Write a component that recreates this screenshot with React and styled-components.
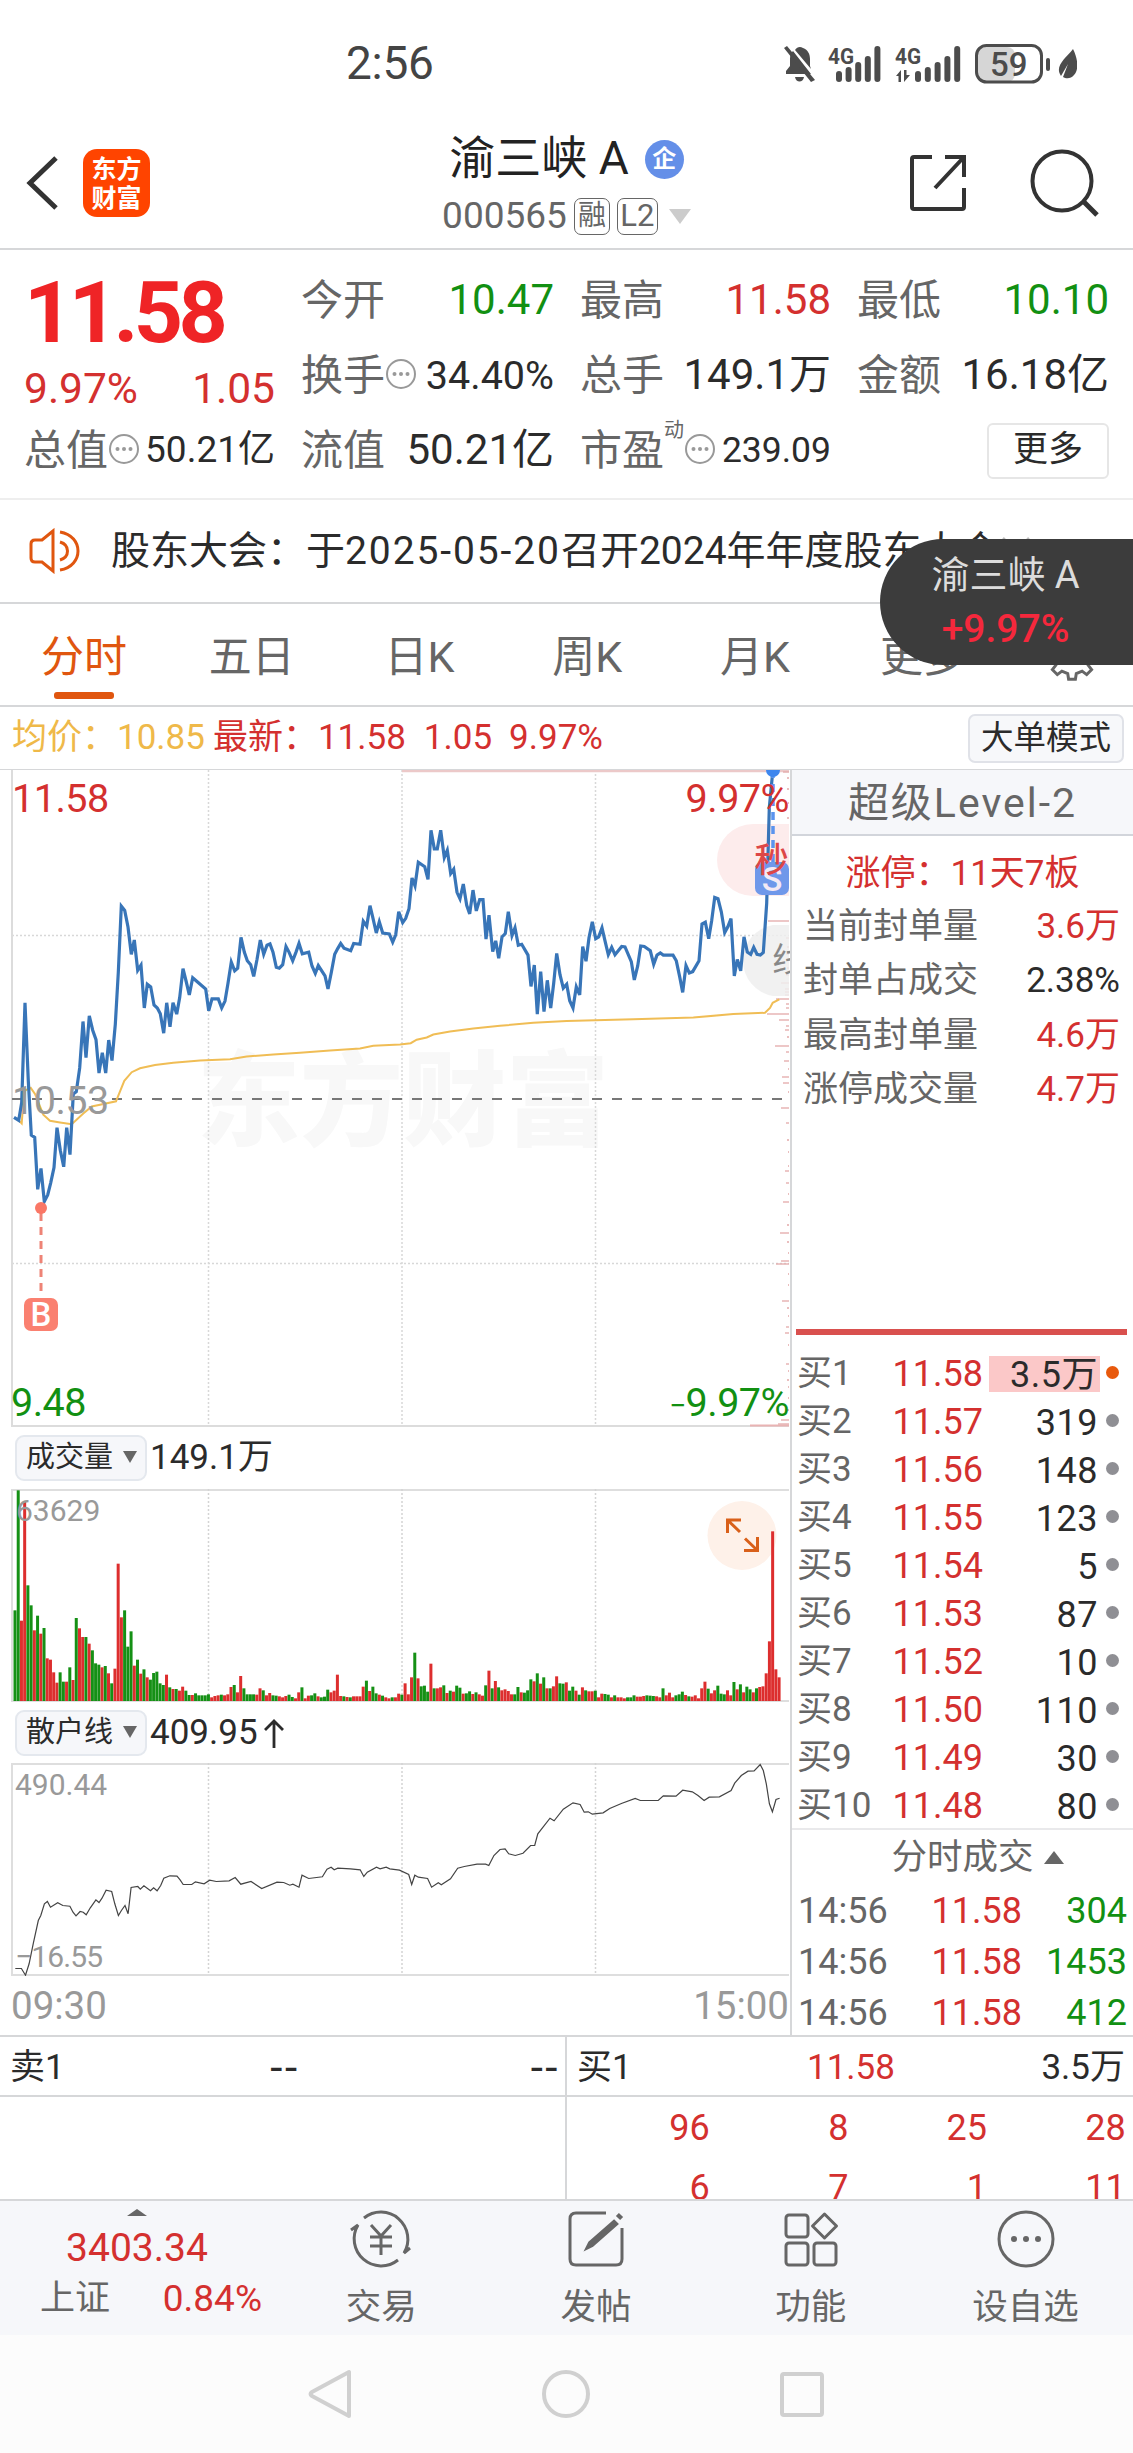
import React from "react";
import styled, { createGlobalStyle } from "styled-components";

const RED = "#d4302f";
const GREEN = "#129012";
const GREY = "#666";
const DARK = "#2b2b2b";
const ORANGE = "#e0560f";
const LINE = "#d6d7d9";
const FONT = `Roboto, "Noto Sans CJK SC", sans-serif`;

const GlobalStyle = createGlobalStyle`
  * {
    box-sizing: border-box;
  }
  body {
    margin: 0;
    background: #fff;
    color: ${DARK};
    font-family: ${FONT};
  }
`;

const Screen = styled.div`
  width: 1133px;
  height: 2453px;
  overflow: hidden;
  position: relative;
  display: flex;
  flex-direction: column;
`;

const Text = styled.span`
  font-size: ${props => props.size || 35}px;
  line-height: 1.2;
  color: ${props => props.color || DARK};
  font-weight: ${props => props.weight || 400};
  letter-spacing: ${props => props.spacing || 0}px;
  white-space: nowrap;
`;

/* status bar */
const StatusBar = styled.div`
  height: 124px;
  display: flex;
  align-items: center;
  justify-content: space-between;
  padding: 3px 56px 0 346px;
`;
const StatusIcons = styled.div`
  display: flex;
  height: 40px;
`;

/* title bar */
const TitleBar = styled.header`
  height: 126px;
  border-bottom: 2px solid ${LINE};
  display: grid;
  grid-template-columns: 300px 1fr 300px;
`;
const TitleLeft = styled.div`
  display: flex;
  align-items: center;
  gap: 25px;
  padding: 0 0 6px 26px;
  height: 124px;
`;
const Logo = styled.div`
  width: 67px;
  height: 68px;
  border-radius: 14px;
  background: #ff4400;
  color: #fff;
  font-family: "Noto Sans CJK SC", sans-serif;
  font-size: 25px;
  font-weight: 700;
  line-height: 29px;
  text-align: center;
  padding-top: 4px;
`;
const TitleMiddle = styled.div`
  display: flex;
  flex-direction: column;
  align-items: center;
`;
const NameRow = styled.div`
  height: 64px;
  padding-top: 6px;
  display: flex;
  align-items: center;
  gap: 16px;
`;
const CompanyBadge = styled.div`
  width: 39px;
  height: 39px;
  border-radius: 50%;
  background: #648fe8;
  color: #fff;
  font-size: 24px;
  font-weight: 700;
  line-height: 38px;
  text-align: center;
`;
const CodeRow = styled.div`
  height: 60px;
  padding-bottom: 4px;
  display: flex;
  align-items: center;
`;
const CodeTag = styled.span`
  height: 37px;
  width: ${props => props.w}px;
  margin-left: 7px;
  border: 1.5px solid ${GREY};
  border-radius: 7px;
  font-size: ${props => props.size}px;
  line-height: 34px;
  color: ${GREY};
  text-align: center;
`;
const Triangle = styled.i`
  border-left: ${props => props.w / 2}px solid transparent;
  border-right: ${props => props.w / 2}px solid transparent;
  border-${props => (props.up ? "bottom" : "top")}: ${props => props.h}px solid ${props => props.color || GREY};
`;
const CodeArrow = styled(Triangle)`
  margin-left: 11px;
`;
const TitleRight = styled.div`
  display: flex;
  align-items: center;
  justify-content: flex-end;
  gap: 61px;
  height: 124px;
  padding: 0 33px 6px 0;
`;

/* quote summary */
const Quote = styled.section`
  height: 250px;
  border-bottom: 2px solid #eee;
  padding: 13px 25px 0 24px;
  display: grid;
  grid-template-columns: 251px 253px 251px 252px;
  grid-template-rows: 75px 75px 75px;
  column-gap: 26px;
`;
const Price = styled.div`
  grid-row: span 2;
  display: flex;
  flex-direction: column;
`;
const LastPrice = styled.div`
  height: 100px;
  font-size: 86px;
  font-weight: 700;
  line-height: 100px;
  letter-spacing: -4.6px;
  color: #ef2426;
`;
const Changes = styled.div`
  display: flex;
  justify-content: space-between;
  height: 48px;
  line-height: 48px;
`;
const Metric = styled.div`
  display: flex;
  align-items: center;
  justify-content: space-between;
`;
const MetricLabel = styled.div`
  display: flex;
  align-items: center;
  font-size: 42px;
  line-height: 50px;
  color: ${GREY};
  white-space: nowrap;
`;
const Sup = styled.span`
  align-self: flex-start;
  font-size: 20px;
  line-height: 20px;
  margin-top: -6px;
`;
const MoreButton = styled.button`
  justify-self: end;
  align-self: center;
  width: 122px;
  height: 56px;
  border: 2px solid #e6e6e6;
  border-radius: 6px;
  background: #fff;
  font-family: ${FONT};
  font-size: 35px;
  line-height: 48px;
  padding: 0 0 2px;
  color: ${DARK};
`;

/* announcement */
const Notice = styled.div`
  height: 104px;
  border-bottom: 2px solid ${LINE};
  display: flex;
  align-items: center;
  padding: 0 31px 0 28px;
`;
const NoticeText = styled.div`
  width: 890px;
  margin-left: 30px;
  font-size: 39px;
  line-height: 48px;
  white-space: nowrap;
  overflow: hidden;
  span {
    letter-spacing: 1.9px;
  }
`;
const FloatingQuote = styled.div`
  position: absolute;
  top: 539px;
  right: 0;
  width: 253px;
  height: 126px;
  border-radius: 63px 0 0 63px;
  background: #3c3c3c;
  display: flex;
  flex-direction: column;
  align-items: center;
  padding: 9px 2px 0 0;
  line-height: 54px;
`;
const FloatingLine = styled.div`
  height: 54px;
  font-size: ${props => props.size}px;
  line-height: 54px;
  color: ${props => props.color};
  font-weight: ${props => props.weight || 400};
`;

/* period tabs */
const Tabs = styled.nav`
  height: 103px;
  border-bottom: 2px solid ${LINE};
  display: flex;
`;
const Tab = styled.div`
  width: 167.8px;
  padding-top: 25px;
  font-size: 43px;
  line-height: 56px;
  text-align: center;
  color: ${props => (props.active ? ORANGE : GREY)};
  &::after {
    content: "";
    display: block;
    width: 60px;
    height: 7px;
    margin: 7px auto 0;
    border-radius: 3px;
    background: ${props => (props.active ? ORANGE : "transparent")};
  }
`;
const Settings = styled.div`
  padding: 24px 0 0 38px;
`;

const InfoRow = styled.div`
  height: 62px;
  display: flex;
  align-items: center;
  padding: 0 9px 0 12px;
`;
const InfoItem = styled.span`
  font-size: 35px;
  line-height: 44px;
  color: ${props => props.color};
  white-space: pre;
  margin-right: ${props => props.gap}px;
`;
const ModeButton = styled.button`
  margin-left: auto;
  width: 156px;
  height: 49px;
  border: 2px solid #e0e2e8;
  border-radius: 7px;
  background: #f7f8fa;
  font-family: ${FONT};
  font-size: 32.5px;
  line-height: 42px;
  padding: 0;
  color: ${DARK};
`;

/* chart column and level 2 column */
const Main = styled.main`
  height: 1268px;
  display: flex;
  border-top: 1px solid ${LINE};
  border-bottom: 2px solid ${LINE};
`;
const Charts = styled.div`
  width: 790px;
  padding-left: 11px;
  svg {
    display: block;
  }
`;
const IndicatorBar = styled.div`
  height: ${props => props.h}px;
  display: flex;
  align-items: center;
  padding-left: 4px;
`;
const IndicatorSelect = styled.div`
  width: 132px;
  height: 46px;
  border: 2px solid #e4e8ee;
  border-radius: 9px;
  background: #f6f7fa;
  display: flex;
  align-items: center;
  justify-content: space-between;
  padding: 0 8px 2px 9px;
  margin-right: 3px;
  font-size: 29px;
  line-height: 40px;
`;
const TimeAxis = styled.div`
  display: flex;
  justify-content: space-between;
  height: 60px;
  padding: 7px 1px 0 0;
  font-size: 38.5px;
  line-height: 46px;
  color: #999;
`;

const Level2 = styled.aside`
  width: 343px;
  border-left: 2px solid ${LINE};
`;
const LevelTitle = styled.div`
  height: 66px;
  background: #f6f7fa;
  border-bottom: 2px solid #d2d5db;
  text-align: center;
  font-size: 41px;
  line-height: 67px;
  letter-spacing: 2px;
  color: ${GREY};
`;
const LimitInfo = styled.div`
  height: 493px;
  padding-top: 12px;
`;
const LimitTitle = styled.div`
  height: 52px;
  text-align: center;
  font-size: 35px;
  line-height: 52px;
  color: ${RED};
`;
const LimitRow = styled.div`
  height: 54.3px;
  display: flex;
  justify-content: space-between;
  padding: 0 13px 0 11px;
  font-size: 35px;
  line-height: 54px;
  color: ${GREY};
`;
const LimitValue = styled.span`
  color: ${props => (props.dark ? DARK : RED)};
`;
const RatioBar = styled.div`
  height: 6px;
  margin: 0 6px 14px 4px;
  background: #d9504e;
`;
const Book = styled.div`
  height: 481px;
  border-bottom: 2px solid #e9e9eb;
`;
const BookRow = styled.div`
  height: 48.05px;
  display: grid;
  grid-template-columns: 80px 106px 117px 20px;
  align-items: center;
  padding: 0 13px 0 5px;
  font-size: 36px;
  line-height: 50px;
`;
const BookPrice = styled.span`
  color: ${RED};
  text-align: right;
`;
const BookVolume = styled.span`
  margin-left: 6px;
  padding-right: 2px;
  height: 36px;
  line-height: 38px;
  letter-spacing: 0.5px;
  text-align: right;
  background: ${props => (props.marked ? "#fbc8c8" : "transparent")};
`;
const BookDot = styled.i`
  justify-self: end;
  width: 13px;
  height: 13px;
  margin: 0 1px 4px 0;
  border-radius: 50%;
  background: ${props => (props.marked ? "#e8590c" : "#8f8f94")};
`;
const TradesTitle = styled.div`
  height: 54px;
  display: flex;
  align-items: center;
  justify-content: center;
  gap: 10px;
  padding-left: 30px;
  font-size: 35.5px;
  line-height: 54px;
  color: ${GREY};
`;
const TradeRow = styled.div`
  height: 51px;
  display: grid;
  grid-template-columns: 110px 114px 1fr;
  padding: 0 6px 0 6px;
  font-size: 36px;
  line-height: 54px;
  color: ${GREY};
`;
const TradeCell = styled.span`
  text-align: right;
  color: ${props => props.color};
`;

/* best bid and ask */
const Best = styled.section`
  height: 162px;
  display: grid;
  grid-template-columns: 567px 566px;
  overflow: hidden;
`;
const BestSide = styled.div`
  border-right: ${props => (props.divider ? `2px solid ${LINE}` : "0")};
`;
const BestHead = styled.div`
  height: 60px;
  border-bottom: 2px solid ${LINE};
  display: grid;
  grid-template-columns: 1fr 1fr 1fr;
  padding: 0 8px 0 10px;
  font-size: 35px;
  line-height: 62px;
`;
const BestPrice = styled.span`
  text-align: center;
  color: ${RED};
`;
const BestVolume = styled.span`
  text-align: right;
`;
const Blank = styled.span`
  font-size: 44px;
  letter-spacing: 2.5px;
  text-align: ${props => props.align};
  margin-right: -3px;
`;
const Orders = styled.div`
  display: grid;
  grid-template-columns: repeat(4, 138.7px);
  padding: 1px 0 0 4px;
  font-size: 36px;
  line-height: 60px;
  text-align: right;
  color: ${RED};
`;

/* bottom bars */
const BottomBar = styled.footer`
  height: 136px;
  border-top: 2px solid ${LINE};
  background: #f6f7fa;
  display: grid;
  grid-template-columns: 274px repeat(4, 1fr);
`;
const IndexBox = styled.div`
  display: flex;
  flex-direction: column;
  align-items: center;
  padding-top: 8px;
`;
const IndexChange = styled.div`
  width: 222px;
  margin-left: 28px;
  height: 52px;
  display: flex;
  align-items: center;
  justify-content: space-between;
`;
const IndexValue = styled.div`
  height: 57px;
  font-size: 39px;
  line-height: 65px;
  color: ${RED};
`;
const Action = styled.div`
  display: flex;
  flex-direction: column;
  align-items: center;
  padding-top: 8px;
  font-size: 35.5px;
  line-height: 54px;
  color: ${GREY};
  svg {
    margin-bottom: 11px;
  }
`;
const SystemNav = styled.div`
  flex: 1;
  background: #fcfcfc;
  display: flex;
  justify-content: center;
  align-items: flex-start;
  gap: 186px;
  padding: 33px 2px 0 0;
`;

/* [x, y] samples of the intraday price, 3 units per pixel across */
const PRICE = `42,824 56,831 65,790 75,560 85,740 94,865 104,870 113,990 123,942 133,1018 143,1003 152,975 162,940
171,848 181,900 191,938 200,848 210,910 220,770 229,765 239,710 249,603 258,686 268,590 278,623 288,645 297,722
307,675 317,722 326,646 336,693 346,610 355,490 364,337 374,347 384,385 394,448 403,415 413,485 423,473 433,572
442,517 452,523 462,565 472,572 481,585 491,630 500,560 510,615 519,560 530,586 539,548 549,481 559,512 568,542
578,502 590,510 617,528 626,578 636,551 655,551 665,572 675,556 684,515 694,466 704,486 713,480 723,409 733,443
742,463 752,472 761,499 771,460 781,415 791,448 801,427 810,424 819,443 829,478 838,480 848,472 858,430 867,443
878,463 888,443 897,423 907,447 926,443 936,475 946,492 955,474 975,498 984,528 994,490 1004,448 1013,435
1022,423 1032,434 1052,440 1061,423 1080,425 1090,372 1100,383 1110,336 1119,365 1129,399 1138,373 1148,399
1168,401 1178,420 1187,403 1196,350 1208,375 1217,365 1227,343 1236,272 1245,290 1255,236 1274,246 1284,275
1293,162 1303,205 1312,205 1322,162 1333,225 1342,208 1352,262 1361,252 1371,305 1380,320 1390,286 1400,335
1409,355 1419,300 1429,348 1439,322 1449,322 1458,413 1467,358 1478,442 1487,417 1496,457 1506,408 1516,400
1525,350 1536,405 1545,387 1555,427 1565,425 1584,450 1593,522 1603,473 1612,586 1622,488 1632,580 1642,508
1652,572 1661,515 1670,446 1680,495 1690,526 1700,517 1709,555 1719,572 1729,523 1739,542 1748,430 1758,464
1767,410 1777,373 1787,412 1796,408 1806,387 1816,420 1825,449 1835,432 1845,449 1865,430 1875,431 1894,465
1903,507 1913,475 1922,429 1933,430 1951,440 1961,471 1971,450 1981,445 1990,450 2019,450 2029,463 2039,500
2048,536 2058,474 2068,491 2078,488 2097,463 2106,378 2116,374 2126,412 2135,370 2144,317 2154,320 2164,350
2174,398 2183,385 2193,366 2203,498 2212,460 2222,486 2232,408 2242,443 2252,448 2261,432 2271,448 2281,450
2290,444 2300,330 2308,110 2318,28`;

const AVERAGE = `56,831 65,838 70,790 76,762 92,756 105,770 130,818 150,832 180,836 215,840 250,815 275,799 300,795 348,787
373,740 395,720 420,711 465,703 520,698 600,693 690,690 740,684 820,679 900,675 990,670 1080,665 1120,659 1200,656
1232,653 1250,645 1280,640 1300,633 1350,626 1420,619 1500,613 1600,606 1700,602 1900,598 2080,594 2200,586
2295,583 2310,572 2318,560 2338,552`;

const RETAIL = `30,684 42,684 50,704 57,670 65,610 75,540 80,525 87,490 93,483 99,500 113,487 123,495 137,497 143,515
149,526 157,513 163,515 169,523 177,502 188,478 194,486 200,473 208,449 219,453 225,490 232,525 238,510 245,495
251,520 257,441 270,438 275,446 282,436 295,451 301,442 308,451 315,435 321,413 333,406 347,407 353,418 359,432
376,432 383,424 400,430 411,419 424,423 449,421 461,411 472,431 492,423 513,444 543,425 556,426 568,434 574,431
586,440 592,404 605,414 632,409 641,386 649,380 655,388 662,383 687,385 706,388 713,408 720,395 738,380 745,385
757,380 764,385 783,389 801,402 807,432 813,404 820,410 838,414 846,440 859,427 865,433 883,415 897,383 910,378
935,371 952,371 958,375 968,345 980,327 990,325 997,340 1010,345 1025,338 1040,315 1048,315 1054,280 1078,233
1086,241 1104,206 1123,187 1137,192 1145,215 1153,214 1161,221 1182,217 1195,204 1218,189 1245,174 1255,180
1290,180 1300,166 1325,167 1338,149 1357,154 1368,165 1380,180 1390,170 1410,169 1433,150 1440,128 1453,105
1466,92 1478,91 1490,72 1496,90 1502,130 1508,190 1514,214 1521,177 1528,173`;

/* one bar a minute: direction and height */
const VOLUME = `g272 g632 r241 r600 g347 g287 r212 g256 r202 g219 r128 r124 r86 r55 g86 g58 r58 g101 r63 g249 r218 r192
g192 r172 g152 g113 g109 r101 g105 r83 g53 r97 r412 r251 g272 g163 g209 r106 g124 r82 g95 r71 g64 g84 g88 g53 g48
r79 g41 r36 g36 r31 r43 g31 g18 r18 g23 g17 g17 g17 g20 r11 r15 r17 g19 r17 r20 r42 g48 r26 r75 g38 g20 g20 g20
r19 r38 g32 r17 r24 g17 g16 r14 r11 r15 g19 g12 r8 r26 g41 r8 r16 g17 g23 r14 g11 g13 g34 r26 r31 r79 r15 g14 r12
g11 r14 r14 r14 r43 g61 r30 g43 g23 r19 g16 r11 r8 g11 r11 r22 g19 r53 r20 r71 g145 r68 g44 g46 g28 r112 g38 r38
r41 g47 r24 g31 r28 g46 g40 r22 g23 g29 r21 g26 r20 r16 g47 r91 g38 r60 g41 r32 r35 r30 r20 g20 g42 r26 g25 g32
g65 r59 g83 r52 g71 r38 g38 r44 r74 g53 g52 r56 g31 g43 r31 g19 r41 g32 r29 r29 g31 r11 r22 g21 g19 r11 g17 r11
r11 r8 g11 g11 g17 r13 r13 r15 g17 g16 g15 r14 r11 g38 r17 r25 r11 g17 g20 g28 r18 g14 r13 r17 r8 r38 r58 g37 r23
r32 g46 g22 g20 r32 r17 g57 r35 g50 r26 g43 g35 r26 g38 r42 r44 r83 r179 r509 r95 r71`;

/* traded volume by price, drawn from the right edge: [y, length] */
const PRICE_LEVELS = [
  [2, 6], [8, 2], [19, 2], [33, 1], [48, 2], [63, 3], [78, 1], [92, 2], [108, 2], [120, 1], [151, 21], [168, 3], [177, 2],
  [184, 3], [190, 2], [198, 2], [205, 3], [213, 8], [219, 4], [222, 4], [225, 4], [229, 13], [234, 3], [238, 3], [244, 22],
  [250, 10], [256, 3], [260, 4], [267, 2], [276, 14], [282, 3], [291, 5], [299, 1], [307, 7], [313, 6], [322, 1],
  [338, 8], [353, 3], [370, 2], [382, 1], [396, 1], [401, 4], [413, 3], [424, 1], [432, 6], [445, 1], [455, 2], [463, 9],
  [472, 2], [483, 1], [491, 8], [494, 13], [504, 1], [515, 1], [531, 7], [538, 2], [546, 1], [557, 3], [563, 4], [575, 1],
  [594, 3], [601, 1], [610, 2], [617, 1], [628, 1], [640, 2], [650, 8], [654, 11]
];

const toPoints = (data, sx, sy, dx, dy) =>
  data
    .trim()
    .split(/\s+/)
    .map(pair => {
      const [x, y] = pair.split(",").map(Number);
      return `${(x / sx - dx).toFixed(1)},${(y / sy - dy).toFixed(1)}`;
    })
    .join(" ");

const metrics = [
  { label: "今开", value: "10.47", color: GREEN },
  { label: "最高", value: "11.58", color: RED },
  { label: "最低", value: "10.10", color: GREEN },
  { label: "换手", value: "34.40%", size: 39.5, info: true },
  { label: "总手", value: "149.1万" },
  { label: "金额", value: "16.18亿" },
  { label: "总值", value: "50.21亿", size: 37, info: true },
  { label: "流值", value: "50.21亿" },
  { label: "市盈", value: "239.09", size: 35.5, info: true, sup: "动" }
];

const limits = [
  ["当前封单量", "3.6万"],
  ["封单占成交", "2.38%"],
  ["最高封单量", "4.6万"],
  ["涨停成交量", "4.7万"]
];

const book = [
  ["11.58", "3.5万"],
  ["11.57", "319"],
  ["11.56", "148"],
  ["11.55", "123"],
  ["11.54", "5"],
  ["11.53", "87"],
  ["11.52", "10"],
  ["11.50", "110"],
  ["11.49", "30"],
  ["11.48", "80"]
];

const InfoIcon = () => (
  <svg width="32" height="34" viewBox="0 0 32 34">
    <circle cx="16" cy="15" r="14" fill="none" stroke="#999" strokeWidth="2" />
    <circle cx="9.5" cy="15" r="2" fill="#999" />
    <circle cx="16" cy="15" r="2" fill="#999" />
    <circle cx="22.5" cy="15" r="2" fill="#999" />
  </svg>
);

/* the signal group is drawn in page pixels starting at x 780, y 42 */
const StatusGlyphs = () => (
  <svg width="297" height="40" viewBox="780 42 297 40">
    <g fill="#4c4c4c">
      <path d="M786 72 L786 69 L790 64 V57 C790 53 791 51 793 49 L811 72 Z" />
      <path d="M795 48 C797 45 800 44 803 46 C808 48 810 52 810 57 V64 L811 67 Z" />
      <path d="M795 75 H804 C803 81 796 81 795 75 Z" />
      <path d="M784 46 L787 44 L815 78 L811 80 Z" />
      {[69, 65, 60, 54, 44].map((y, i) => (
        <rect key={y} x={836 + i * 9.6} y={y} width="6" height={80 - y} rx="3" />
      ))}
      {[69, 65, 60, 54, 44].map((y, i) => (
        <rect key={y} x={915 + i * 9.8} y={y} width="6" height={80 - y} rx="3" />
      ))}
      <path d="M901 68 V80 H898.500 V74 L896 74 Z M904 80 V68 H906.500 V73 L910 73 Z" />
      <rect x="1046" y="56" width="4" height="13" rx="2" />
      <path d="M1073 47 C1078 57 1079 68 1074 73 C1071 77 1066 77 1063 75 L1068 62 L1061 74 C1054 64 1066 56 1073 47 Z" />
    </g>
    <rect x="977" y="45" width="38" height="35" rx="8" fill="#d6d6d6" />
    <rect x="976.500" y="43.500" width="65" height="36.500" rx="10" fill="none" stroke="#4c4c4c" strokeWidth="3" />
    <g fill="#4c4c4c" fontFamily="Roboto" fontWeight="700">
      <text x="828" y="62" fontSize="22" textLength="26" lengthAdjust="spacingAndGlyphs">4G</text>
      <text x="895" y="62" fontSize="22" textLength="26" lengthAdjust="spacingAndGlyphs">4G</text>
      <text x="990" y="73.500" fontSize="33" fontWeight="500">59</text>
    </g>
  </svg>
);

const PriceChart = () => (
  <svg width="779" height="657" viewBox="0 0 779 657">
    <text x="186" y="368" fontSize="103" fontWeight="900" fill="#f8f8f8" fontFamily="Noto Sans CJK SC" textLength="412">
      东方财富
    </text>
    <g stroke="#d8d8d8" strokeWidth="1.500" strokeDasharray="2 2">
      <path d="M1 165.500 H778 M1 493.500 H778" />
      <path d="M197.500 0 V656 M391 0 V656 M584.500 0 V656" />
    </g>
    <path d="M1 0 V656 H778" fill="none" stroke="#dcdcdc" strokeWidth="2" />
    <path d="M391 1 H778" stroke="#ecc9c9" strokeWidth="2.500" />
    <path d="M739 655.500 H778" stroke="#e9b3b3" strokeWidth="2" />
    {PRICE_LEVELS.map(([y, w]) => (
      <path key={y} d={`M${778 - w} ${y} h${w}`} stroke="#e3a9a9" strokeWidth="1.300" />
    ))}
    <path d="M778 54 H742 A36 36 0 0 0 742 126 H778 Z" fill="#fdecec" />
    <path d="M778 155 H762 A36 36 0 0 0 762 226 H778 Z" fill="#eee" fillOpacity="0.85" />
    <path d="M1 329 H778" stroke="#777" strokeWidth="2" strokeDasharray="10 10" />
    <polyline points={toPoints(AVERAGE, 3, 2.306, 11, 10)} fill="none" stroke="#f0bd55" strokeWidth="2" />
    <polyline points={toPoints(PRICE, 3, 2.306, 11, 10)} fill="none" stroke="#3875b8" strokeWidth="3.200" />

    <path d="M30 443 V527" stroke="#ee8376" strokeWidth="3" strokeDasharray="8 6" />
    <circle cx="30" cy="438" r="6" fill="#fa7766" />
    <rect x="13" y="528" width="34" height="33" rx="7" fill="#fa8070" />
    <text x="30" y="555.500" fontSize="33" fontWeight="500" fill="#fff" textAnchor="middle">B</text>

    <path d="M762 0 V92" stroke="#5b94ee" strokeWidth="3.500" strokeDasharray="8 6" />
    <path d="M755 0 A7 7 0 0 0 769 0 Z" fill="#3d86ee" />
    <rect x="744" y="92" width="34" height="33" rx="7" fill="#6f98ea" />
    <text x="761" y="121" fontSize="34" fontWeight="500" fill="#f4e9f4" textAnchor="middle">S</text>
    <text x="743.500" y="102" fontSize="34" fontWeight="500" fill="#dd4747">秒</text>
    <text x="761" y="202" fontSize="34" fill="#888">线</text>

    <g fontSize="39.500" letterSpacing="-0.500">
      <text x="1" y="42" fill={RED}>11.58</text>
      <text x="1" y="344" fill="#999">10.53</text>
      <text x="0" y="646" fill={GREEN}>9.48</text>
      <text x="778" y="42" fill={RED} textAnchor="end">9.97%</text>
      <text x="778" y="646" fill={GREEN} textAnchor="end">
        <tspan fontSize="30">−</tspan>9.97%
      </text>
    </g>
  </svg>
);

const VolumeChart = () => (
  <svg width="779" height="213" viewBox="0 0 779 213">
    <path d="M0 1 H778 M1 0 V212 M0 212 H778" stroke="#dedede" strokeWidth="2" />
    <path d="M197.500 0 V212 M391 0 V212 M584.500 0 V212" stroke="#d4d4d4" strokeWidth="1.500" strokeDasharray="2 2" />
    <circle cx="731" cy="46.500" r="34.500" fill="#fef1e9" />
    <g fill="none" stroke="#d9601a" strokeWidth="3">
      <path d="M730 31 H716.500 V44 M716.500 31 L729 43" />
      <path d="M733 61.500 H746.500 V48 M746.500 61.500 L734 49.500" />
    </g>
    {VOLUME.split(/\s+/).map((bar, i) => {
      const h = Number(bar.slice(1)) / 3;
      return (
        <rect
          key={i}
          x={2.5 + i * 3.224}
          y={212 - h}
          width="3"
          height={h}
          fill={bar[0] === "r" ? "#dd2e2e" : "#159015"}
        />
      );
    })}
    <text x="5" y="32" fontSize="30" fill="#999">63629</text>
  </svg>
);

const RetailChart = () => (
  <svg width="779" height="213" viewBox="0 0 779 213">
    <path d="M0 1 H778 M1 0 V212 M0 212 H778" stroke="#dedede" strokeWidth="2" />
    <path d="M197.500 0 V212 M391 0 V212 M584.500 0 V212" stroke="#d4d4d4" strokeWidth="1.500" strokeDasharray="2 2" />
    <polyline points={toPoints(RETAIL, 1.96, 3, 11, 22.5)} fill="none" stroke="#444" strokeWidth="1.200" />
    <g fontSize="30" fill="#999">
      <text x="4" y="32">490.44</text>
      <text x="4" y="204" textLength="88">−16.55</text>
    </g>
  </svg>
);

const gearPath = () => {
  const points = [];
  for (let i = 0; i < 8; i += 1) {
    [[-13, 19], [-8, 24.5], [8, 24.5], [13, 19]].forEach(([deg, r]) => {
      const a = ((i * 45 + deg) * Math.PI) / 180;
      points.push(`${(27 + r * Math.sin(a)).toFixed(1)},${(27 - r * Math.cos(a)).toFixed(1)}`);
    });
  }
  return points.join(" ");
};

const App = () => (
  <Screen>
    <GlobalStyle />
    <StatusBar>
      <Text size={46} color="#444" spacing={-0.3}>2:56</Text>
      <StatusIcons>
        <StatusGlyphs />
      </StatusIcons>
    </StatusBar>

    <TitleBar>
      <TitleLeft>
        <svg width="32" height="54" viewBox="0 0 32 54" fill="none" stroke="#333" strokeWidth="5">
          <path d="M30 2 L4 27 L30 52" />
        </svg>
        <Logo>
          东方
          <br />
          财富
        </Logo>
      </TitleLeft>
      <TitleMiddle>
        <NameRow>
          <Text size={46} color="#222">渝三峡 A</Text>
          <CompanyBadge>企</CompanyBadge>
        </NameRow>
        <CodeRow>
          <Text size={37} color={GREY}>000565</Text>
          <CodeTag w={36} size={28}>融</CodeTag>
          <CodeTag w={41} size={31}>L2</CodeTag>
          <CodeArrow w={22} h={15} color="#ccc" />
        </CodeRow>
      </TitleMiddle>
      <TitleRight>
        <svg width="60" height="60" viewBox="0 0 60 60" fill="none" stroke="#333" strokeWidth="4">
          <path d="M24 4 H6 Q4 4 4 6 V54 Q4 56 6 56 H54 Q56 56 56 54 V35" />
          <path d="M37 4 H56 V24 M56 4 L27 35" />
        </svg>
        <svg width="71" height="70" viewBox="0 0 71 70" fill="none" stroke="#333" strokeWidth="4">
          <circle cx="33" cy="33" r="29.500" />
          <path d="M54 53 L68 67" strokeWidth="5" />
        </svg>
      </TitleRight>
    </TitleBar>

    <Quote>
      <Price>
        <LastPrice>11.58</LastPrice>
        <Changes>
          <Text size={42.5} color={RED}>9.97%</Text>
          <Text size={42.5} color={RED}>1.05</Text>
        </Changes>
      </Price>
      {metrics.map(item => (
        <Metric key={item.label}>
          <MetricLabel>
            {item.label}
            {item.sup && <Sup>{item.sup}</Sup>}
            {item.info && <InfoIcon />}
          </MetricLabel>
          <Text size={item.size || 42} color={item.color}>{item.value}</Text>
        </Metric>
      ))}
      <MoreButton>更多</MoreButton>
    </Quote>

    <Notice>
      <svg width="53" height="46" viewBox="0 0 53 46" fill="none" stroke={ORANGE} strokeWidth="3">
        <path d="M25 3 L14 12 H7 Q3 12 3 16 V30 Q3 34 7 34 H14 L25 43 Z" />
        <path d="M32 4 C56 8 56 38 32 42 M32 14 C42 17 42 29 32 32" />
      </svg>
      <NoticeText>
        股东大会：于<span>2025-05-20</span>召开2024年年度股东大会
      </NoticeText>
      <svg width="30" height="30" viewBox="0 0 30 30" stroke="#bbb" strokeWidth="2.500">
        <path d="M2 2 L28 28 M28 2 L2 28" />
      </svg>
    </Notice>

    <Tabs>
      {["分时", "五日", "日K", "周K", "月K", "更多"].map((name, i) => (
        <Tab key={name} active={i === 0 || undefined}>{name}</Tab>
      ))}
      <Settings>
        <svg width="54" height="54" viewBox="0 0 54 54" fill="none" stroke={GREY} strokeWidth="3">
          <polygon points={gearPath()} />
          <circle cx="27" cy="27" r="8" />
        </svg>
      </Settings>
    </Tabs>

    <InfoRow>
      <InfoItem color="#efb949" gap={8}>均价：10.85</InfoItem>
      <InfoItem color={RED} gap={18}>最新：11.58</InfoItem>
      <InfoItem color={RED} gap={17}>1.05</InfoItem>
      <InfoItem color={RED} gap={0}>9.97%</InfoItem>
      <ModeButton>大单模式</ModeButton>
    </InfoRow>

    <Main>
      <Charts>
        <PriceChart />
        <IndicatorBar h={62}>
          <IndicatorSelect>
            成交量
            <Triangle w={15} h={12} />
          </IndicatorSelect>
          <Text size={35}>149.1万</Text>
        </IndicatorBar>
        <VolumeChart />
        <IndicatorBar h={61}>
          <IndicatorSelect>
            散户线
            <Triangle w={15} h={12} />
          </IndicatorSelect>
          <Text size={35}>409.95</Text>
          <svg width="28" height="32" viewBox="0 0 28 32" fill="none" stroke={DARK} strokeWidth="2.800">
            <path d="M16 31 V4 M7 13 L16 4 L25 13" />
          </svg>
        </IndicatorBar>
        <RetailChart />
        <TimeAxis>
          <span>09:30</span>
          <span>15:00</span>
        </TimeAxis>
      </Charts>

      <Level2>
        <LevelTitle>超级Level-2</LevelTitle>
        <LimitInfo>
          <LimitTitle>涨停：11天7板</LimitTitle>
          {limits.map(([label, value], i) => (
            <LimitRow key={label}>
              {label}
              <LimitValue dark={i === 1 || undefined}>{value}</LimitValue>
            </LimitRow>
          ))}
        </LimitInfo>
        <RatioBar />
        <Book>
          {book.map(([price, volume], i) => (
            <BookRow key={price}>
              <Text size={35} color={GREY}>买{i + 1}</Text>
              <BookPrice>{price}</BookPrice>
              <BookVolume marked={i === 0 || undefined}>{volume}</BookVolume>
              <BookDot marked={i === 0 || undefined} />
            </BookRow>
          ))}
        </Book>
        <TradesTitle>
          分时成交
          <Triangle up w={20} h={13} />
        </TradesTitle>
        {["304", "1453", "412"].map(volume => (
          <TradeRow key={volume}>
            14:56
            <TradeCell color={RED}>11.58</TradeCell>
            <TradeCell color={GREEN}>{volume}</TradeCell>
          </TradeRow>
        ))}
      </Level2>
    </Main>

    <Best>
      <BestSide divider>
        <BestHead>
          <span>卖1</span>
          <Blank align="center">--</Blank>
          <Blank align="right">--</Blank>
        </BestHead>
      </BestSide>
      <BestSide>
        <BestHead>
          <span>买1</span>
          <BestPrice>11.58</BestPrice>
          <BestVolume>3.5万</BestVolume>
        </BestHead>
        <Orders>
          {[96, 8, 25, 28, 6, 7, 1, 11].map(n => (
            <span key={n}>{n}</span>
          ))}
        </Orders>
      </BestSide>
    </Best>

    <BottomBar>
      <IndexBox>
        <Triangle up w={20} h={7} />
        <IndexValue>3403.34</IndexValue>
        <IndexChange>
          <Text size={35} color={GREY}>上证</Text>
          <Text size={37} color={RED}>0.84%</Text>
        </IndexChange>
      </IndexBox>
      <Action>
        <svg width="68" height="60" viewBox="0 0 68 60" fill="none" stroke={GREY} strokeWidth="3">
          <path d="M17 9 A27 27 0 0 1 57 44 L63 39" />
          <path d="M51 51 A27 27 0 0 1 11 16 L4 21" />
          <path d="M24 16 L34 27 L44 16 M34 27 V46 M23 28 H45 M23 37 H45" />
        </svg>
        交易
      </Action>
      <Action>
        <svg width="60" height="60" viewBox="0 0 60 60" fill="none" stroke={GREY} strokeWidth="3">
          <path d="M40 4 H10 Q4 4 4 10 V50 Q4 56 10 56 H50 Q56 56 56 50 V19" />
          <path d="M48 13 L50 15 L26 36 L22 38 L24 34 Z" strokeWidth="4" />
          <path d="M52 9 L55 6" strokeWidth="6" />
        </svg>
        发帖
      </Action>
      <Action>
        <svg width="60" height="60" viewBox="0 0 60 60" fill="none" stroke={GREY} strokeWidth="3">
          <rect x="5" y="6" width="22" height="22" rx="3" />
          <rect x="5" y="34" width="22" height="22" rx="3" />
          <rect x="33" y="34" width="22" height="22" rx="3" />
          <path d="M43.500 5 L55.500 17 L43.500 29 L31.500 17 Z" strokeLinejoin="round" />
        </svg>
        功能
      </Action>
      <Action>
        <svg width="60" height="60" viewBox="0 0 60 60" fill="none" stroke={GREY} strokeWidth="3">
          <circle cx="30" cy="30" r="27" />
          <g fill={GREY} stroke="none">
            <circle cx="18" cy="30" r="3" />
            <circle cx="30" cy="30" r="3" />
            <circle cx="42" cy="30" r="3" />
          </g>
        </svg>
        设自选
      </Action>
    </BottomBar>

    <SystemNav>
      <svg width="48" height="52" viewBox="0 0 48 52" fill="none" stroke="#d0d0d0" strokeWidth="4">
        <path d="M43 4 V48 L6 28 Q3 26 6 24 Z" strokeLinejoin="round" />
      </svg>
      <svg width="52" height="52" viewBox="0 0 52 52" fill="none" stroke="#d0d0d0" strokeWidth="4">
        <circle cx="26" cy="26" r="22" />
      </svg>
      <svg width="48" height="52" viewBox="0 0 48 52" fill="none" stroke="#d0d0d0" strokeWidth="4">
        <rect x="4" y="6" width="40" height="41" rx="2" />
      </svg>
    </SystemNav>

    <FloatingQuote>
      <FloatingLine size={38} color="#dcdcdc">渝三峡 A</FloatingLine>
      <FloatingLine size={39} color="#f5283c" weight={500}>+9.97%</FloatingLine>
    </FloatingQuote>
  </Screen>
);

export default App;
